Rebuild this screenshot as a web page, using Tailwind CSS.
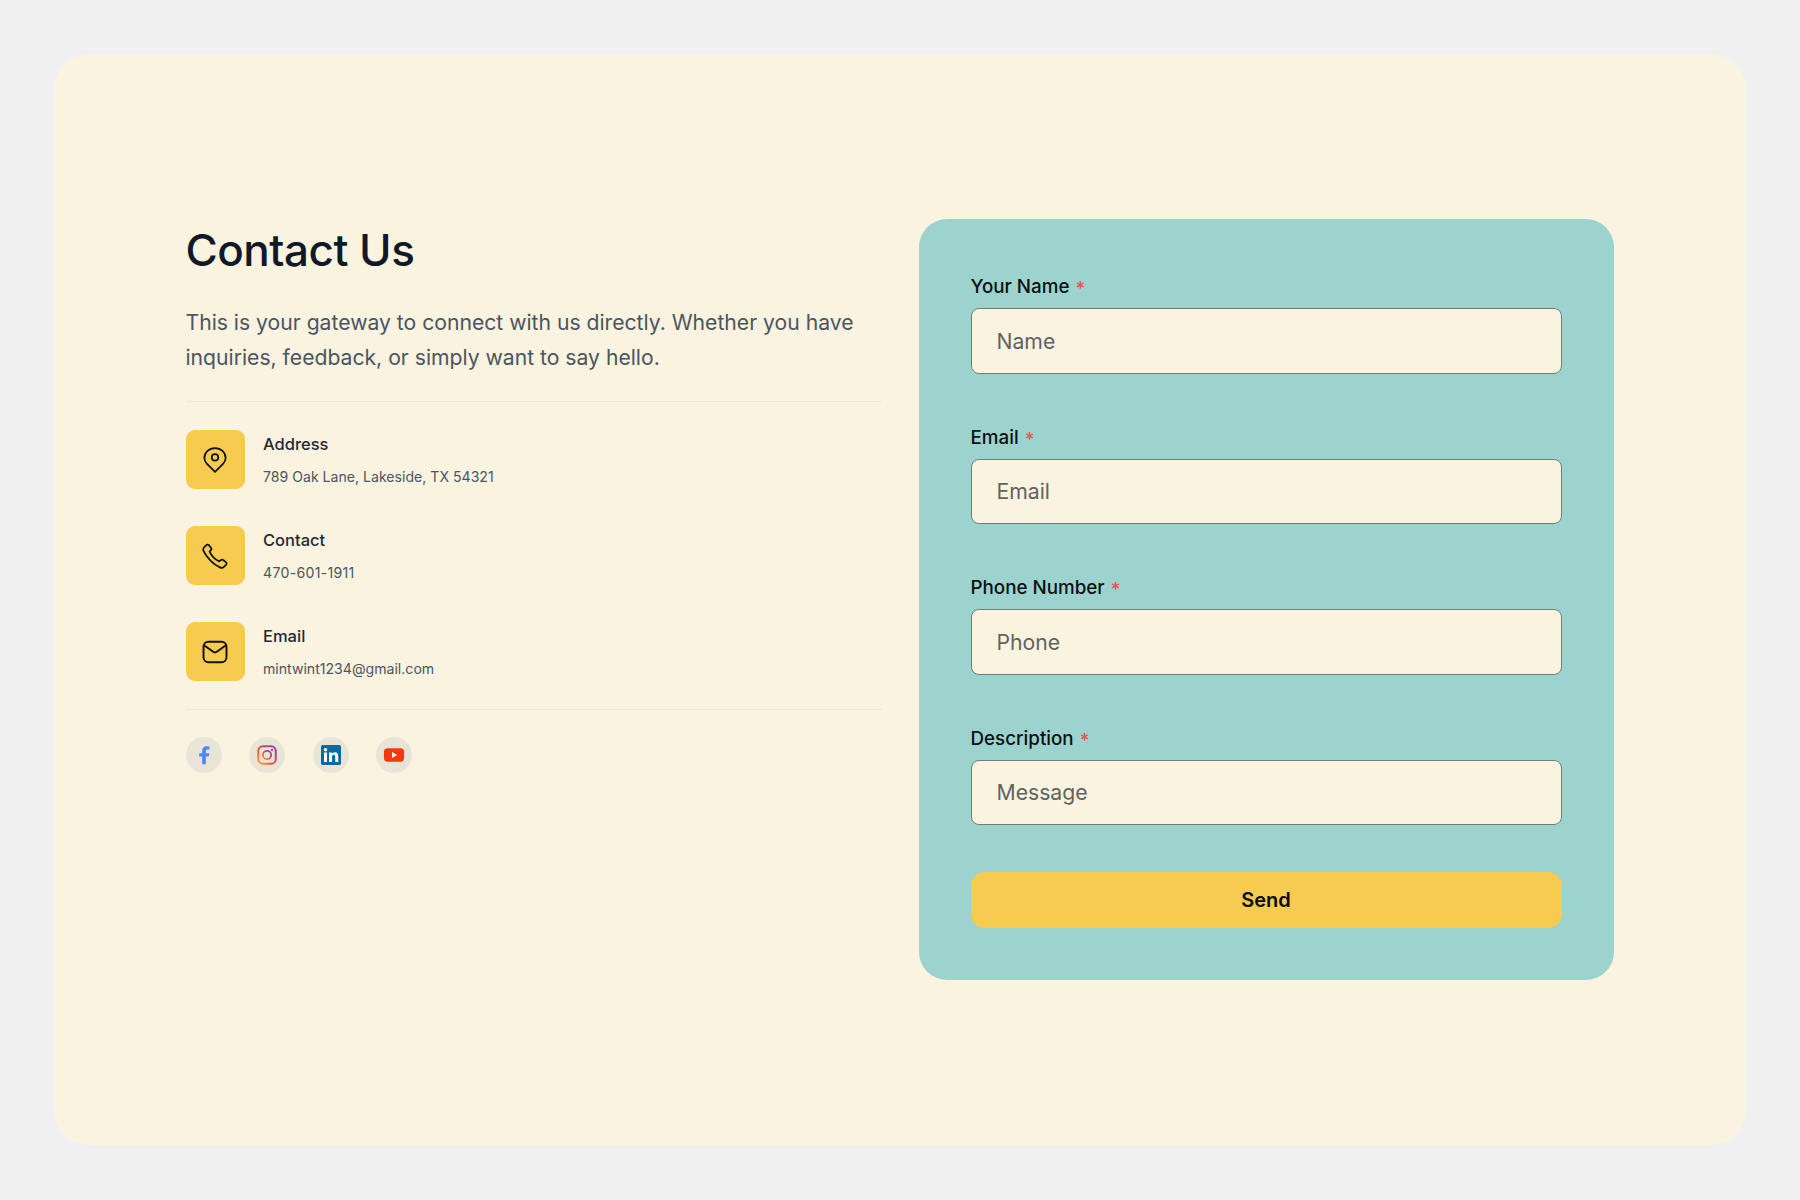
<!doctype html>
<html>
<head>
<meta charset="utf-8">
<script src="https://cdn.jsdelivr.net/npm/@tailwindcss/browser@4"></script>
</head>
<body class="bg-[#f0f0f0] font-['Inter',sans-serif]">
<div class="h-[1200px] w-[1800px] p-[54px]">
  <div class="flex h-[1091px] items-center gap-[37px] rounded-[36px] bg-[#faf3e0] pr-[132px] pl-[131.5px]">
    <div class="h-[761px] w-[696px]">
      <h1 class="mt-[6px] text-[44px] leading-[50px] font-medium tracking-[-0.5px] text-[#111827]">Contact Us</h1>
      <p class="mt-[29.5px] text-[21.15px] leading-[35px] text-[#4b5563]">This is your gateway to connect with us directly. Whether you have inquiries, feedback, or simply want to say hello.</p>
      <div class="mt-[26px] flex flex-col gap-[37px] border-y border-[#efe8d5] py-[28px]">
        <div class="flex items-start gap-[18.5px]">
          <div class="flex h-[59px] w-[59px] items-center justify-center rounded-[9px] bg-[#f7ca50]">
            <svg class="translate-y-[1px]" width="26" height="26" viewBox="0 0 24 24" fill="none" stroke="#111" stroke-width="1.6" stroke-linejoin="round"><path d="M12 23 L4.6 15.6 C3 14 2.2 12.2 2.2 10.2 C2.2 5 6.6 1 12 1 C17.4 1 21.8 5 21.8 10.2 C21.8 12.2 21 14 19.4 15.6 Z"/><circle cx="12" cy="9.6" r="3"/></svg>
          </div>
          <div class="pt-[2.5px]">
            <div class="text-[16.5px] leading-[24px] font-medium text-[#1f2937]">Address</div>
            <div class="mt-[9px] text-[14.1px] leading-[23px] text-[#4b5563]">789 Oak Lane, Lakeside, TX 54321</div>
          </div>
        </div>
        <div class="flex items-start gap-[18.5px]">
          <div class="flex h-[59px] w-[59px] items-center justify-center rounded-[9px] bg-[#f7ca50]">
            <svg class="translate-y-[1px]" width="26" height="26" viewBox="0 0 24 24" fill="none" stroke="#111" stroke-width="1.6" stroke-linejoin="round"><path d="M1.6 4.4 L4 1.9 C4.7 1.2 5.8 1.3 6.4 2 L8.3 4.5 C8.8 5.1 8.8 6 8.2 6.6 L7 7.9 C8.6 11.4 12.4 15.4 16 17 L17.3 15.8 C17.9 15.2 18.8 15.2 19.5 15.7 L22 17.6 C22.8 18.2 22.9 19.4 22.2 20.1 L20.2 22 C19.2 23 17.9 23.1 16.6 22.5 C10.6 19.8 4.2 13.4 1.5 7.6 C1 6.4 1 5.2 1.6 4.4 Z"/></svg>
          </div>
          <div class="pt-[2.5px]">
            <div class="text-[16.5px] leading-[24px] font-medium text-[#1f2937]">Contact</div>
            <div class="mt-[9px] text-[14.1px] leading-[23px] tracking-[0.3px] text-[#4b5563]">470-601-1911</div>
          </div>
        </div>
        <div class="flex items-start gap-[18.5px]">
          <div class="flex h-[59px] w-[59px] items-center justify-center rounded-[9px] bg-[#f7ca50]">
            <svg class="translate-y-[1px]" width="26" height="26" viewBox="0 0 24 24" fill="none" stroke="#111" stroke-width="1.8" stroke-linejoin="round" stroke-linecap="round"><rect x="1.4" y="2.6" width="21.2" height="18.8" rx="4.5"/><path d="M2.2 6 L10 11.6 C11.2 12.5 12.8 12.5 14 11.6 L21.8 6"/></svg>
          </div>
          <div class="pt-[2.5px]">
            <div class="text-[16.5px] leading-[24px] font-medium text-[#1f2937]">Email</div>
            <div class="mt-[9px] text-[14.1px] leading-[23px] text-[#4b5563]">mintwint1234@gmail.com</div>
          </div>
        </div>
      </div>
      <div class="mt-[27px] flex gap-[27.5px]">
        <div class="flex h-[36px] w-[36px] items-center justify-center rounded-full bg-[#e8e4d8]">
          <svg width="22" height="22" viewBox="0 0 24 24" fill="#4f86f7"><path d="M14 22 V13.5 H17.2 L17.8 10 H14 V7.8 C14 6.7 14.5 6 15.9 6 H18 V2.9 C17.2 2.7 16 2.5 14.9 2.5 C11.9 2.5 10 4.4 10 7.4 V10 H6.8 V13.5 H10 V22 Z"/></svg>
        </div>
        <div class="flex h-[36px] w-[36px] items-center justify-center rounded-full bg-[#e8e4d8]">
          <svg width="20" height="20" viewBox="0 0 24 24" fill="none"><defs><linearGradient id="ig" x1="0" y1="1" x2="1" y2="0"><stop offset="0" stop-color="#f9a825"/><stop offset="0.45" stop-color="#e8503a"/><stop offset="1" stop-color="#8a3ac8"/></linearGradient></defs><rect x="1.5" y="1.5" width="21" height="21" rx="5.5" stroke="url(#ig)" stroke-width="2.4"/><circle cx="12" cy="12" r="5" stroke="url(#ig)" stroke-width="2.2"/><circle cx="18" cy="6" r="1.4" fill="#b5389f"/></svg>
        </div>
        <div class="flex h-[36px] w-[36px] items-center justify-center rounded-full bg-[#e8e4d8]">
          <svg width="20" height="20" viewBox="0 0 24 24"><rect width="24" height="24" rx="2" fill="#0a6a9c"/><rect x="3.6" y="9" width="3.6" height="11.4" fill="#fff"/><circle cx="5.4" cy="5.6" r="2.1" fill="#fff"/><path fill="#fff" d="M9.6 9 H13 V10.6 C13.6 9.6 14.9 8.7 16.7 8.7 C19.9 8.7 20.7 10.8 20.7 13.8 V20.4 H17.1 V14.5 C17.1 13 16.8 11.8 15.3 11.8 C13.7 11.8 13.2 13 13.2 14.5 V20.4 H9.6 Z"/></svg>
        </div>
        <div class="flex h-[36px] w-[36px] items-center justify-center rounded-full bg-[#e8e4d8]">
          <svg width="22" height="22" viewBox="0 0 24 24"><rect x="1" y="4.6" width="22" height="14.8" rx="4" fill="#f43a0c"/><path d="M9.8 8.8 L15.4 12 L9.8 15.2 Z" fill="#fff"/></svg>
        </div>
      </div>
    </div>
    <form class="h-[761px] w-[695px] rounded-[28px] bg-[#9dd3cf] px-[52px] pt-[54px]">
      <div class="flex flex-col gap-[50px]">
        <div>
          <label class="block text-[18.8px] leading-[28px] font-medium text-[#0b1010]">Your Name <span class="ml-[1px] inline-block translate-y-[2px] text-[#e8554e]">*</span></label>
          <div class="mt-[7px] flex h-[65.5px] items-center rounded-[8px] border border-[#6f7f78] bg-[#faf3e0] px-[25px] pt-[2px] text-[21.2px] text-[#5f6360]">Name</div>
        </div>
        <div>
          <label class="block text-[18.8px] leading-[28px] font-medium text-[#0b1010]">Email <span class="ml-[1px] inline-block translate-y-[2px] text-[#e8554e]">*</span></label>
          <div class="mt-[7px] flex h-[65.5px] items-center rounded-[8px] border border-[#6f7f78] bg-[#faf3e0] px-[25px] pt-[2px] text-[21.2px] text-[#5f6360]">Email</div>
        </div>
        <div>
          <label class="block text-[18.8px] leading-[28px] font-medium text-[#0b1010]">Phone Number <span class="ml-[1px] inline-block translate-y-[2px] text-[#e8554e]">*</span></label>
          <div class="mt-[7px] flex h-[65.5px] items-center rounded-[8px] border border-[#6f7f78] bg-[#faf3e0] px-[25px] pt-[2px] text-[21.2px] text-[#5f6360]">Phone</div>
        </div>
        <div>
          <label class="block text-[18.8px] leading-[28px] font-medium text-[#0b1010]">Description <span class="ml-[1px] inline-block translate-y-[2px] text-[#e8554e]">*</span></label>
          <div class="mt-[7px] flex h-[65.5px] items-center rounded-[8px] border border-[#6f7f78] bg-[#faf3e0] px-[25px] pt-[2px] text-[21.2px] text-[#5f6360]">Message</div>
        </div>
      </div>
      <button type="button" class="mt-[47px] flex h-[56px] w-full items-center justify-center rounded-[14px] bg-[#f7ca50] text-[20px] font-semibold text-[#0b0b0b]">Send</button>
    </form>
  </div>
</div>
</body>
</html>
